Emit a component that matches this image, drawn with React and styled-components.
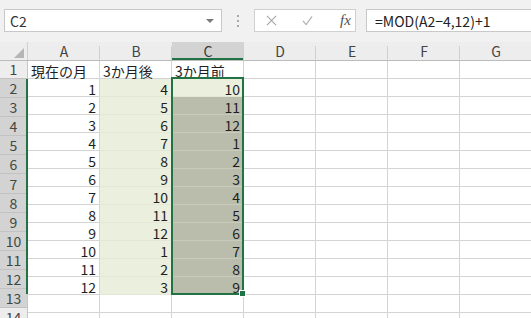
import React from 'react';
import styled, { createGlobalStyle } from 'styled-components';

const COLUMNS = ['A', 'B', 'C', 'D', 'E', 'F', 'G'];
const ROW_COUNT = 15;

function cellValues (row) {
    if (row === 1) return ['現在の月', '3か月後', '3か月前'];
    if (row > 13) return [];
    const now = row - 1;
    return [now, ((now + 2) % 12) + 1, (((now - 4) % 12) + 12) % 12 + 1];
}

function App () {
    const rows = Array.from({ length: ROW_COUNT }, (_, i) => i + 1);

    return (
        <>
            <GlobalStyle />
            <FormulaBar>
                <NameBox>
                    <span>C2</span>
                    <DropArrow />
                </NameBox>
                <Grip>
                    <i /><i /><i />
                </Grip>
                <ButtonBox>
                    <svg width="11" height="11" viewBox="0 0 12 12">
                        <path d="M1 1 L11 11 M11 1 L1 11" stroke="#a6a6a6" strokeWidth="1.2" fill="none" />
                    </svg>
                    <svg width="11" height="11" viewBox="0 0 12 12">
                        <path d="M1 6.5 L4.5 10.5 L11 1.5" stroke="#b0b0b0" strokeWidth="1.3" fill="none" />
                    </svg>
                    <Fx>fx</Fx>
                </ButtonBox>
                <FormulaInput>=MOD(A2−4,12)+1</FormulaInput>
            </FormulaBar>

            <Sheet>
                <HeaderRow>
                    <Corner>
                        <svg width="10" height="10" viewBox="0 0 10 10">
                            <polygon points="10,0 10,10 0,10" fill="#b5b5b5" />
                        </svg>
                    </Corner>
                    {COLUMNS.map(c => (
                        <ColHeader key={c} selected={c === 'C'}>{c}</ColHeader>
                    ))}
                </HeaderRow>

                <Body>
                    <RowHeaders>
                        {rows.map(r => (
                            <RowHeader key={r} selected={r >= 2 && r <= 13}>{r}</RowHeader>
                        ))}
                    </RowHeaders>
                    <RowMark />

                    <Grid>
                        {rows.map(r => {
                            const vals = cellValues(r);
                            return COLUMNS.map((c, ci) => {
                                const v = vals[ci];
                                const data = r >= 2 && r <= 13;
                                let fill = 'none';
                                if (data && c === 'B') fill = 'light';
                                if (data && c === 'C') fill = r === 2 ? 'light' : 'selected';
                                return (
                                    <Cell
                                        key={c + r}
                                        fill={fill}
                                        numeric={typeof v === 'number'}
                                    >
                                        {v}
                                    </Cell>
                                );
                            });
                        })}
                        <Selection>
                            <FillHandle />
                        </Selection>
                    </Grid>
                </Body>
            </Sheet>
        </>
    );
}

const GlobalStyle = createGlobalStyle`
    html, body {
        margin: 0;
        padding: 0;
        background: #ffffff;
        overflow: hidden;
    }
    body {
        font-family: 'Noto Sans CJK JP', 'Liberation Sans', sans-serif;
        color: #2b2b2b;
    }
`;

const FormulaBar = styled.div`
    height: 42px;
    box-sizing: border-box;
    background: #f1f1f1;
    display: flex;
    align-items: flex-start;
    padding: 9px 0 0 4px;
`;

const NameBox = styled.div`
    width: 218px;
    height: 23px;
    box-sizing: border-box;
    background: #ffffff;
    border: 1px solid #c8c8c8;
    display: flex;
    align-items: center;
    justify-content: space-between;
    padding: 0 7px 0 5px;
    font-size: 14px;
    line-height: 1;
    color: #333;
`;

const DropArrow = styled.span`
    width: 0;
    height: 0;
    border-left: 4px solid transparent;
    border-right: 4px solid transparent;
    border-top: 4px solid #7a7a7a;
`;

const Grip = styled.div`
    width: 32px;
    height: 23px;
    display: flex;
    flex-direction: column;
    align-items: center;
    justify-content: center;
    gap: 3px;

    i {
        display: block;
        width: 2px;
        height: 2px;
        background: #a8a8a8;
    }
`;

const ButtonBox = styled.div`
    width: 102px;
    height: 23px;
    box-sizing: border-box;
    background: #ffffff;
    border: 1px solid #d0d0d0;
    display: flex;
    align-items: center;
    padding: 0 0 0 11px;
    gap: 25px;
`;

const Fx = styled.span`
    font-family: 'Liberation Serif', serif;
    font-style: italic;
    font-size: 15px;
    color: #505050;
    line-height: 1;
    margin-left: 2px;
`;

const FormulaInput = styled.div`
    flex: 1;
    height: 23px;
    margin-left: 10px;
    box-sizing: border-box;
    background: #ffffff;
    border: 1px solid #c8c8c8;
    border-right: none;
    display: flex;
    align-items: center;
    padding-left: 8px;
    font-size: 14px;
    line-height: 1;
    color: #222;
    white-space: nowrap;
`;

const Sheet = styled.div`
    display: flex;
    flex-direction: column;
    height: 276px;
    overflow: hidden;
`;

const HeaderRow = styled.div`
    display: flex;
    height: 19px;
    box-sizing: border-box;
    background: #ededed;
    border-bottom: 1px solid #bcbcbc;
    flex-shrink: 0;
`;

const Corner = styled.div`
    width: 28px;
    flex-shrink: 0;
    box-sizing: border-box;
    border-right: 1px solid #d0d0d0;
    display: flex;
    align-items: flex-end;
    justify-content: flex-end;
    padding: 0 3px 2px 0;
`;

const ColHeader = styled.div`
    width: 72px;
    flex-shrink: 0;
    box-sizing: border-box;
    position: relative;
    display: flex;
    align-items: center;
    justify-content: center;
    font-size: 14px;
    line-height: 1;
    color: ${p => (p.selected ? '#3a3a3a' : '#444')};
    background: ${p => (p.selected ? '#d3d3d3' : 'transparent')};
    box-shadow: ${p => (p.selected ? 'inset 0 -2px 0 #217346' : 'none')};

    &::after {
        content: '';
        position: absolute;
        right: 0;
        top: 4px;
        bottom: 0;
        width: 1px;
        background: #d0d0d0;
    }
`;

const Body = styled.div`
    position: relative;
    display: flex;
    flex: 1;
    overflow: hidden;
`;

const RowHeaders = styled.div`
    width: 28px;
    flex-shrink: 0;
    display: flex;
    flex-direction: column;
    background: #ededed;
    box-sizing: border-box;
    border-right: 1px solid #c6c6c6;
    margin-top: -1px;
`;

const RowHeader = styled.div`
    height: 19.08px;
    flex-shrink: 0;
    box-sizing: border-box;
    border-bottom: 1px solid #c2c2c2;
    display: flex;
    align-items: center;
    justify-content: center;
    font-size: 14px;
    line-height: 1;
    color: ${p => (p.selected ? '#3d4a42' : '#444')};
    background: ${p => (p.selected ? '#d3d3d3' : '#ededed')};
`;

const RowMark = styled.div`
    position: absolute;
    left: 26px;
    top: 18px;
    width: 2px;
    height: 215px;
    background: #217346;
`;

const Grid = styled.div`
    position: relative;
    display: grid;
    grid-template-columns: repeat(7, 72px);
    grid-auto-rows: 18px;
    flex-shrink: 0;
    align-self: flex-start;
`;

const fills = {
    none: '#ffffff',
    light: '#ebefdd',
    selected: '#babdac',
};

const lines = {
    none: '#d4d4d4',
    light: '#e3e7d5',
    selected: '#c8cbbb',
};

const Cell = styled.div`
    box-sizing: border-box;
    background: ${p => fills[p.fill]};
    border-right: 1px solid ${p => lines[p.fill]};
    border-bottom: 1px solid ${p => lines[p.fill]};
    display: flex;
    align-items: center;
    justify-content: ${p => (p.numeric ? 'flex-end' : 'flex-start')};
    padding: 2px 3px 0 3px;
    font-size: 14px;
    line-height: 1;
    color: #1f1f1f;
    white-space: nowrap;
`;

const Selection = styled.div`
    position: absolute;
    left: 143px;
    top: 16px;
    width: 73px;
    height: 218px;
    box-sizing: border-box;
    border: 2px solid #217346;
    pointer-events: none;
`;

const FillHandle = styled.div`
    position: absolute;
    right: -4px;
    bottom: -4px;
    width: 7px;
    height: 7px;
    box-sizing: border-box;
    background: #217346;
    border: 1px solid #ffffff;
`;

export default App;
